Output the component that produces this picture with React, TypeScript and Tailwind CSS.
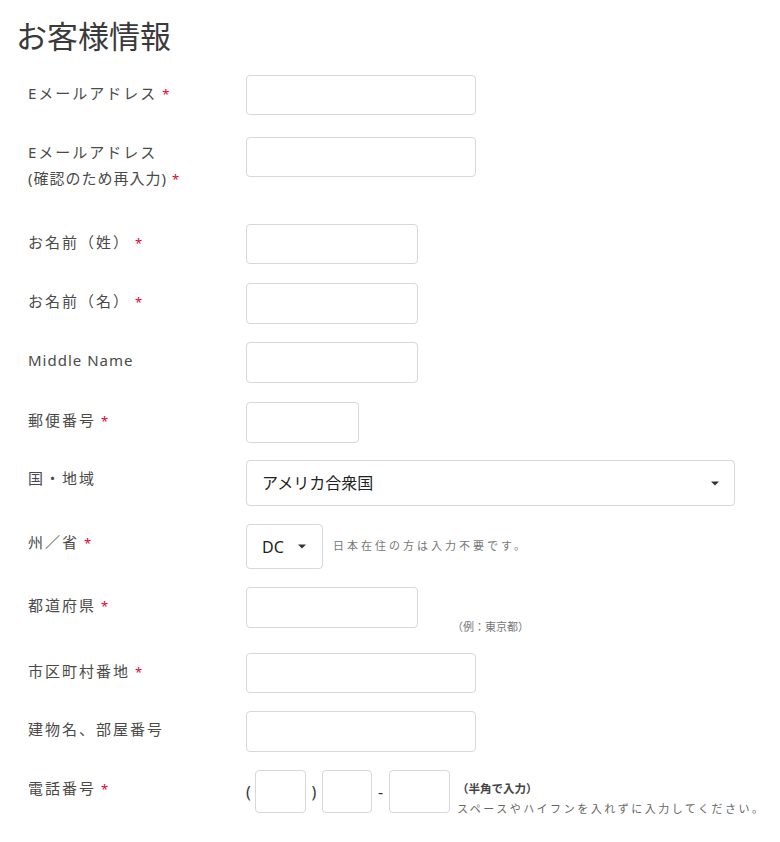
const font = { fontFamily: '"Noto Sans", "Noto Sans CJK JP", sans-serif' }

function Req() {
  return <span className="ml-[5px] text-[13px] text-[#e5002d]">*</span>
}

function Caret() {
  return (
    <svg width="8" height="5" viewBox="0 0 8 5" className="shrink-0">
      <path d="M0 0.5 H8 L4 4.5 Z" fill="#333" />
    </svg>
  )
}

function Box({ className }: { className: string }) {
  return <div className={`rounded-[4px] border border-[#d7d7dc] bg-white ${className}`} />
}

function Label({ children, required }: { children: React.ReactNode; required?: boolean }) {
  return (
    <div className="w-[218px] shrink-0 pt-[8px] text-[15px] leading-[20px] tracking-[2px] text-[#4a4a4a]">
      {children}
      {required ? <Req /> : null}
    </div>
  )
}

export default function App() {
  return (
    <div className="min-h-[842px] w-[780px] bg-white px-[16px]" style={font}>
      <h1 className="pt-[16px] text-[31px] leading-[40px] font-normal text-[#3a3a3a]">お客様情報</h1>

      <div className="pl-[12px]">
        <div className="mt-[19px] flex items-start">
          <Label required>Eメールアドレス</Label>
          <Box className="h-[40px] w-[230px]" />
        </div>

        <div className="mt-[22px] flex items-start">
          <div className="w-[218px] shrink-0 pt-[2px] text-[15px] leading-[26px] tracking-[2px] text-[#4a4a4a]">
            Eメールアドレス
            <br />
            <span className="tracking-[1px]">(確認のため再入力)</span>
            <Req />
          </div>
          <Box className="h-[40px] w-[230px]" />
        </div>

        <div className="mt-[32px] flex items-start">
          <Label required>お名前（姓）</Label>
          <Box className="h-[40px] w-[172px]" />
        </div>

        <div className="mt-[19px] flex items-start">
          <Label required>お名前（名）</Label>
          <Box className="h-[41px] w-[172px]" />
        </div>

        <div className="mt-[18px] flex items-start">
          <Label>
            <span className="tracking-[1px]">Middle Name</span>
          </Label>
          <Box className="h-[41px] w-[172px]" />
        </div>

        <div className="mt-[19px] flex items-start">
          <Label required>郵便番号</Label>
          <Box className="h-[41px] w-[113px]" />
        </div>

        <div className="mt-[17px] flex items-start">
          <Label>国・地域</Label>
          <div className="flex h-[46px] w-[489px] items-center justify-between rounded-[4px] border border-[#d7d7dc] pr-[15px] pl-[15px] text-[16px] text-[#222]">
            <span>アメリカ合衆国</span>
            <Caret />
          </div>
        </div>

        <div className="mt-[18px] flex items-start">
          <Label required>州／省</Label>
          <div className="flex items-center">
            <div className="flex h-[45px] w-[77px] items-center justify-between rounded-[4px] border border-[#d7d7dc] pr-[16px] pl-[15px] text-[16px] text-[#222]">
              <span>DC</span>
              <Caret />
            </div>
            <span className="ml-[10px] text-[11px] tracking-[3px] whitespace-nowrap text-[#777]">日本在住の方は入力不要です。</span>
          </div>
        </div>

        <div className="mt-[18px] flex items-start">
          <Label required>都道府県</Label>
          <div className="flex items-start">
            <Box className="h-[41px] w-[172px]" />
            <span className="ml-[34px] pt-[34px] text-[11px] leading-[12px] text-[#777]">（例：東京都）</span>
          </div>
        </div>

        <div className="mt-[20px] flex items-start">
          <Label required>市区町村番地</Label>
          <Box className="h-[40px] w-[230px]" />
        </div>

        <div className="mt-[18px] flex items-start">
          <Label>建物名、部屋番号</Label>
          <Box className="h-[41px] w-[230px]" />
        </div>

        <div className="mt-[18px] flex items-start">
          <Label required>電話番号</Label>
          <div className="flex items-start">
            <div className="flex h-[43px] items-center text-[16px] text-[#333]">
              <span className="w-[9px]">(</span>
              <Box className="h-[43px] w-[51px]" />
              <span className="w-[16px] text-center">)</span>
              <Box className="h-[43px] w-[50px]" />
              <span className="w-[17px] text-center">-</span>
              <Box className="h-[43px] w-[61px]" />
            </div>
            <div className="ml-[7px] pt-[11px] text-[11px] leading-[16px] whitespace-nowrap text-[#666]">
              <div className="text-[11.5px] font-bold text-[#444]">（半角で入力）</div>
              <div className="mt-[4px] tracking-[2.5px]">スペースやハイフンを入れずに入力してください。</div>
            </div>
          </div>
        </div>
      </div>
    </div>
  )
}
